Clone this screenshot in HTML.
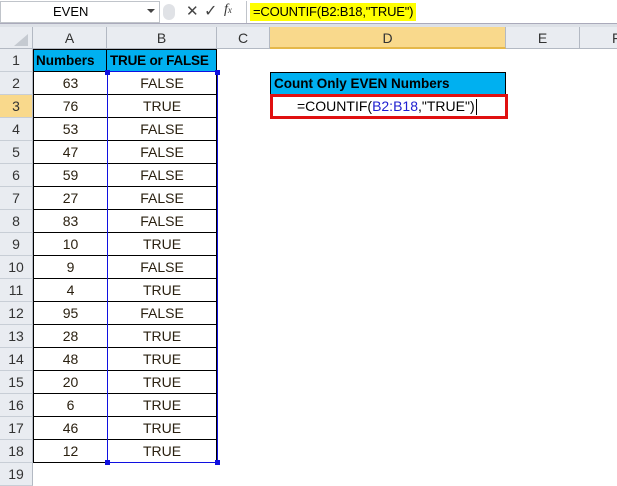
<!DOCTYPE html><html><head><style>
body{margin:0;width:617px;height:474px;overflow:hidden;background:#fff;font-family:"Liberation Sans",Calibri,sans-serif;position:relative}
div{position:absolute;box-sizing:border-box}
.t{font-size:14px;text-align:center;line-height:23px;color:#2a2010}
.rh{left:0;width:33px;height:23px;background:#e9ecf1;border-right:1px solid #b3b9c3;border-bottom:1px solid #c8ced6;text-align:center;line-height:23px;font-size:14px;color:#333}
.ch{top:27px;height:22px;background:#e9ecf1;border-right:1px solid #b3b9c3;border-bottom:1px solid #b3b9c3;text-align:center;line-height:22px;font-size:14px;color:#333}
</style></head><body>
<div style="left:0;top:0;width:617px;height:24px;background:#fff;border-bottom:1px solid #aab"></div>
<div style="left:0;top:24px;width:617px;height:3px;background:#dde1e7"></div>
<div style="left:0;top:1px;width:160px;height:22px;border:1px solid #c0c4ca;font-size:13px;line-height:20px;padding-left:52px">EVEN</div>
<div style="left:147px;top:9px;width:0;height:0;border-left:4px solid transparent;border-right:4px solid transparent;border-top:4px solid #444"></div>
<div style="left:163px;top:4px;width:12px;height:16px;border-radius:6px;background:#e0e2e6"></div>
<div style="left:186px;top:2px;font-size:15px;color:#444">✕</div>
<div style="left:204px;top:1px;font-size:16px;color:#444">✓</div>
<div style="left:224px;top:2px;font-size:14px;font-style:italic;font-family:'Liberation Serif',serif;color:#333">f<span style="font-size:9px">x</span></div>
<div style="left:246px;top:1px;width:371px;height:22px;border-left:1px solid #c0c4ca"></div>
<div style="left:250px;top:3px;width:166px;height:18px;background:#ffff00;font-size:13px;line-height:18px;padding-left:3px;letter-spacing:-0.2px;white-space:nowrap">=COUNTIF(B2:B18,"TRUE")</div>
<div style="left:0;top:27px;width:33px;height:22px;background:#e9ecf1;border-right:1px solid #b3b9c3;border-bottom:1px solid #b3b9c3"></div>
<div style="left:14px;top:34px;width:0;height:0;border-left:14px solid transparent;border-bottom:12px solid #c5cad1"></div>
<div class="ch" style="left:33px;width:74px">A</div>
<div class="ch" style="left:107px;width:110px">B</div>
<div class="ch" style="left:217px;width:53px">C</div>
<div class="ch" style="left:270px;width:236px;background:#f9d98c;border-bottom:2px solid #e5b84a">D</div>
<div class="ch" style="left:506px;width:74px">E</div>
<div class="ch" style="left:580px;width:40px;text-align:left;padding-left:32px">F</div>
<div id="g"></div>
<script>
var n=[63,76,53,47,59,27,83,10,9,4,95,28,48,20,6,46,12],h='';
for(var i=0;i<19;i++){var y=49+i*23;h+='<div class="rh" style="top:'+y+'px;'+(i==2?'background:#f9d98c;':'')+'">'+(i+1)+'</div>';}
h+='<div style="left:33px;top:49px;width:184px;height:23px;background:#00b0f0;border:1px solid #000;font-weight:bold;font-size:13.5px;line-height:21px;white-space:nowrap"><span style="position:absolute;left:2px">Numbers</span><span style="position:absolute;left:76px;letter-spacing:-0.2px">TRUE or FALSE</span></div><div style="left:106px;top:49px;width:1px;height:23px;background:#000"></div>';
for(var i=0;i<17;i++){var y=72+i*23,v=n[i]%2==0?'TRUE':'FALSE';
h+='<div class="t" style="left:33px;top:'+y+'px;width:74px;height:23px;border-bottom:1px solid #000;border-left:1px solid #000">'+n[i]+'</div>';
h+='<div class="t" style="left:107px;top:'+y+'px;width:110px;height:23px;border-bottom:1px solid #000;border-left:1px solid #000;border-right:1px solid #000">'+v+'</div>';}
h+='<div style="left:107px;top:71px;width:111px;height:392px;border:1px solid #1010e0"></div>';
h+='<div style="left:105px;top:70px;width:5px;height:5px;background:#1010e0"></div><div style="left:215px;top:70px;width:5px;height:5px;background:#1010e0"></div><div style="left:105px;top:460px;width:5px;height:5px;background:#1010e0"></div><div style="left:215px;top:460px;width:5px;height:5px;background:#1010e0"></div>';
document.getElementById('g').outerHTML=h;
</script>
<div style="left:270px;top:72px;width:236px;height:23px;background:#00b0f0;border:1px solid #000;font-weight:bold;font-size:13.5px;line-height:21px;padding-left:3px">Count Only EVEN Numbers</div>
<div style="left:270px;top:94px;width:238px;height:25px;border:3px solid #e01010;font-size:14px;line-height:19px;padding-left:24px;white-space:nowrap">=COUNTIF(<span style="color:#2020d0">B2:B18</span>,"TRUE")<span style="display:inline-block;width:1px;height:16px;background:#000;vertical-align:middle;margin-left:1px"></span></div>
</body></html>
